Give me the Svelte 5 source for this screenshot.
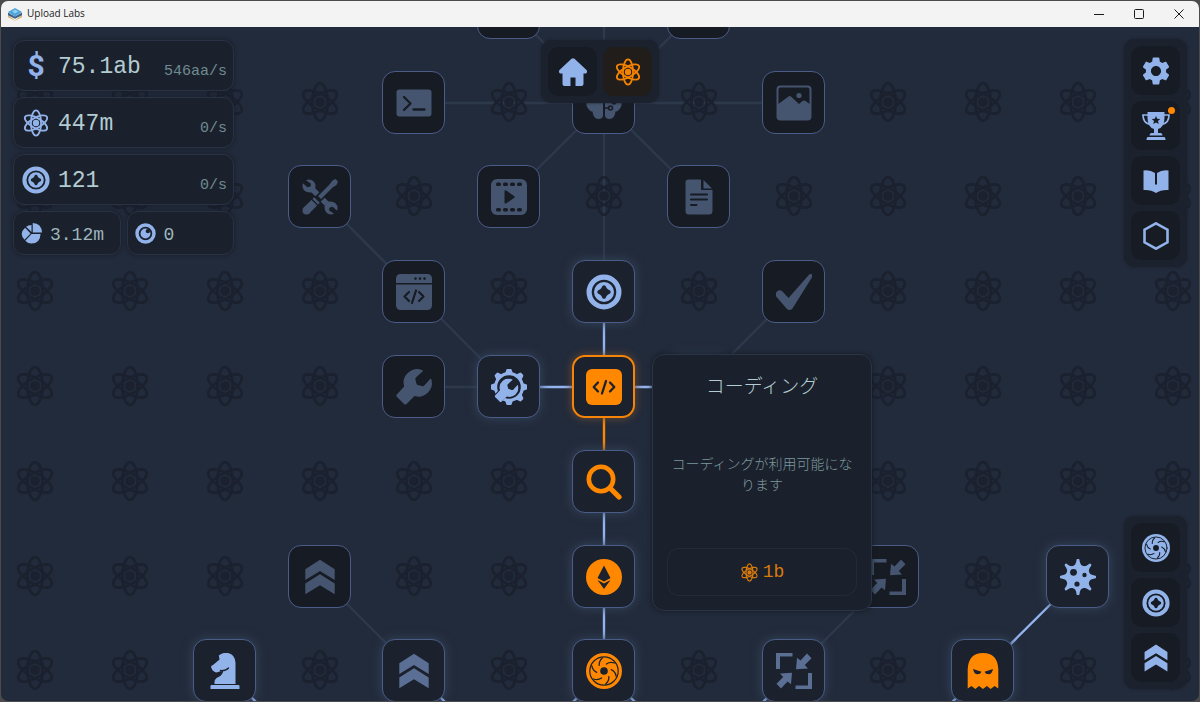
<script>
  // Grid step of the research tree, in pixels
  const STEP = 94.8;
  const at = (n) => Math.round(n * STEP);

  // state: locked | open | active, tone: dim | soft | blue | orange
  const nodes = [
    { col: -1, row: -4, icon: 'file', state: 'locked', tone: 'dim', label: 'Text' },
    { col: 1, row: -4, icon: 'image', state: 'locked', tone: 'dim', label: 'Picture' },
    { col: -2, row: -3, icon: 'terminal', state: 'locked', tone: 'dim', label: 'Terminal' },
    { col: 0, row: -3, icon: 'brain', state: 'locked', tone: 'dim', label: 'AI' },
    { col: 2, row: -3, icon: 'image', state: 'locked', tone: 'dim', label: 'Image' },
    { col: -3, row: -2, icon: 'tools', state: 'locked', tone: 'dim', label: 'Tools' },
    { col: -1, row: -2, icon: 'film', state: 'locked', tone: 'dim', label: 'Video' },
    { col: 1, row: -2, icon: 'file', state: 'locked', tone: 'dim', label: 'Document' },
    { col: -2, row: -1, icon: 'window', state: 'locked', tone: 'dim', label: 'Application' },
    { col: 0, row: -1, icon: 'token', state: 'open', tone: 'blue', label: 'Token' },
    { col: 2, row: -1, icon: 'check', state: 'locked', tone: 'dim', label: 'Check' },
    { col: -2, row: 0, icon: 'wrench', state: 'locked', tone: 'dim', label: 'Repair' },
    { col: -1, row: 0, icon: 'service', state: 'open', tone: 'blue', label: 'Service' },
    { col: 0, row: 0, icon: 'code', state: 'active', tone: 'orange', label: 'コーディング' },
    { col: 1, row: 0, icon: 'check', state: 'open', tone: 'soft', label: 'Test' },
    { col: 0, row: 1, icon: 'search', state: 'open', tone: 'orange', label: 'Search' },
    { col: -3, row: 2, icon: 'chevrons', state: 'locked', tone: 'dim', label: 'Boost II' },
    { col: 0, row: 2, icon: 'crypto', state: 'open', tone: 'orange', label: 'Crypto' },
    { col: 3, row: 2, icon: 'compress', state: 'locked', tone: 'dim', label: 'Compress II' },
    { col: 5, row: 2, icon: 'virus', state: 'open', tone: 'blue', label: 'Virus' },
    { col: -4, row: 3, icon: 'knight', state: 'open', tone: 'blue', label: 'Strategy' },
    { col: -2, row: 3, icon: 'chevrons', state: 'open', tone: 'soft', label: 'Boost' },
    { col: 0, row: 3, icon: 'swirl', state: 'open', tone: 'orange', label: 'Portal' },
    { col: 2, row: 3, icon: 'compress', state: 'open', tone: 'soft', label: 'Compress' },
    { col: 4, row: 3, icon: 'ghost', state: 'open', tone: 'orange', label: 'Ghost' }
  ];

  // [col, row, col, row, kind]
  const links = [
    [-1, -4, 0, -3, 'faint'],
    [1, -4, 0, -3, 'faint'],
    [0, -5, 0, -3, 'faint'],
    [-2, -3, 2, -3, 'faint'],
    [0, -3, -1, -2, 'faint'],
    [0, -3, 1, -2, 'faint'],
    [0, -3, 0, -1, 'faint'],
    [-3, -2, -1, 0, 'faint'],
    [-2, 0, -1, 0, 'faint'],
    [2, -1, 1, 0, 'faint'],
    [-3, 2, -2, 3, 'faint'],
    [3, 2, 2, 3, 'faint'],
    [0, -1, 0, 0, 'lit'],
    [-1, 0, 1, 0, 'lit'],
    [0, 1, 0, 3, 'lit'],
    [5, 2, 3, 4, 'lit'],
    [-4, 3, -3, 4, 'lit'],
    [-2, 3, -1, 4, 'lit'],
    [0, 3, -1, 4, 'lit'],
    [0, 3, 1, 4, 'lit'],
    [2, 3, 1, 4, 'lit'],
    [0, 0, 0, 1, 'hot']
  ];

  const taken = new Set(nodes.map((n) => `${n.col},${n.row}`));
  const atoms = [];
  for (let row = -3; row <= 6; row++) {
    for (let col = -10; col <= 10; col++) {
      if (!taken.has(`${col},${row}`)) atoms.push({ col, row });
    }
  }

  const stats = [
    { icon: 'dollar', value: '75.1ab', rate: '546aa/s' },
    { icon: 'atom', value: '447m', rate: '0/s' },
    { icon: 'token', value: '121', rate: '0/s' }
  ];
  const smallStats = [
    { icon: 'pie', value: '3.12m' },
    { icon: 'orb', value: '0' }
  ];

  const menu = [
    { icon: 'gear', label: 'Settings' },
    { icon: 'trophy', label: 'Achievements', badge: true },
    { icon: 'book', label: 'Guide' },
    { icon: 'hexagon', label: 'Modules' }
  ];
  const shortcuts = [
    { icon: 'swirl', label: 'Portal' },
    { icon: 'token', label: 'Tokens' },
    { icon: 'chevrons', label: 'Boosts' }
  ];

  const sixths = [0, 60, 120, 180, 240, 300];
  const eighths = [0, 45, 90, 135, 180, 225, 270, 315];
</script>

<svg class="defs" aria-hidden="true">
  <symbol id="atom" viewBox="0 0 42 42">
    <g fill="none" stroke="currentColor" stroke-width="2.7">
      {#each [0, 60, 120] as r}
        <ellipse cx="21" cy="21" rx="7.6" ry="18.9" transform="rotate({r} 21 21)" />
      {/each}
    </g>
    <circle cx="21" cy="21" r="4.8" fill="currentColor" />
  </symbol>
  <symbol id="terminal" viewBox="0 0 36 36">
    <rect x=".5" y="4.5" width="35" height="27" rx="3" fill="currentColor" />
    <path class="cut" d="M8 12l6.500 6.500L8 25M17.500 24.500h11" stroke-width="2.3" />
  </symbol>
  <symbol id="brain" viewBox="0 0 36 36">
    <path fill="currentColor" d="M17 3.5C13-.5 8 2 7.5 6 3 7 1 11 3 14.500-.5 17-.5 22 3.500 25c.5 1 2 1.500 3 1.500C7 31 9 34 12.500 34c2.500 0 4-1 4.500-3zM19 3.500C23-.5 28 2 28.500 6 33 7 35 11 33 14.500c3.500 2.500 3.500 7.500-.5 10.500-.5 1-2 1.500-3 1.500C29 31 27 34 23.500 34c-2.500 0-4-1-4.500-3z" />
    <path class="cut" d="M19 23h4M19 14h5l3 3" stroke-width="1.6" />
    <circle class="cut" cx="24.500" cy="23" r="2" stroke-width="1.600" />
    <circle class="cut" cx="28" cy="17" r="1.800" stroke-width="1.600" />
  </symbol>
  <symbol id="image" viewBox="0 0 36 36">
    <rect x="1.500" y="1.500" width="33" height="33" rx="3" fill="none" stroke="currentColor" stroke-width="2" />
    <path fill="currentColor" d="M1 20 12.500 11.500q1.500-1 3 .5L23 19l3.500-3q1.500-1 3 0L35 20v12q0 3-3 3H4q-3 0-3-3z" />
    <circle cx="23" cy="10.500" r="2.600" fill="currentColor" />
  </symbol>
  <symbol id="film" viewBox="0 0 36 36">
    <rect width="36" height="36" rx="6" fill="currentColor" />
    {#each [5, 12, 19, 26] as x}
      <rect class="hole" {x} y="3.500" width="5" height="3.600" rx="1.600" />
      <rect class="hole" {x} y="29" width="5" height="3.600" rx="1.600" />
    {/each}
    <path class="hole" d="M13.500 12.500q0-2 1.800-1L23 17q1.500 1 0 2l-7.700 5.300q-1.800 1-1.800-1z" />
  </symbol>
  <symbol id="file" viewBox="0 0 36 36">
    <path fill="currentColor" d="M7.500.5H20v10.500h11.500V32q0 3.500-3.500 3.500H8q-3.500 0-3.500-3.500V3.500q0-3 3-3zM22.500 1l8.500 8.500h-8.500z" />
    <path class="cut" d="M10 15.500h16M10 20.500h16M10 26h5.500" stroke-width="2" />
  </symbol>
  <symbol id="window" viewBox="0 0 36 36">
    <path fill="currentColor" d="M5 0h26q5 0 5 5v4H0V5q0-5 5-5zM0 10.500h36V31q0 5-5 5H5q-5 0-5-5z" />
    <path class="cut" d="m13 18-4.500 4.500L13 27M23 18l4.500 4.500L23 27M20 16.500 16 29" stroke-width="2.200" />
    <g class="hole">
      <circle cx="19.500" cy="4.600" r="1.300" />
      <circle cx="24" cy="4.600" r="1.300" />
      <circle cx="28.500" cy="4.600" r="1.300" />
    </g>
  </symbol>
  <symbol id="token" viewBox="0 0 36 36">
    <circle cx="18" cy="18" r="14.900" fill="none" stroke="currentColor" stroke-width="5.200" />
    <circle cx="18" cy="18" r="10" fill="currentColor" />
    <path class="hole" d="M18 11.300q1.500 0 2 1.500.4 1.300 1.300 1.900.6.700 1.900 1.300 1.500.5 1.500 2t-1.500 2q-1.300.6-1.900 1.300-.9.600-1.300 1.900-.5 1.500-2 1.500t-2-1.500q-.4-1.300-1.300-1.900-.6-.7-1.900-1.300-1.500-.5-1.500-2t1.500-2q1.300-.6 1.900-1.300.9-.6 1.300-1.900.5-1.500 2-1.500z" />
  </symbol>
  <symbol id="check" viewBox="0 0 36 36">
    <path fill="currentColor" d="M1 17.500q2.500-2.500 5.500 0l6 6.500L33 .7q1.700-1.500 3 0 1 1 0 2.600L16.500 34.500q-3 3-6 0L.6 23q-2-3 .4-5.500z" />
  </symbol>
  <symbol id="wrench" viewBox="0 0 36 36">
    <path fill="currentColor" d="M27 1.500A13.500 13.500 0 0 0 8.200 17.500L.8 25.500q-1 1.200 0 2.300L8 35q1.300 1 2.500 0l8-8A13.500 13.500 0 0 0 35.200 10q-.3-.8-1 0L28 16.700q-1 .8-2.300.4l-4-1.200q-1-.3-1.300-1.400l-1-4q-.3-1.200.5-2L26.500 2.500q.8-.7.500-1z" />
  </symbol>
  <symbol id="tools" viewBox="0 0 36 36">
    <path d="m9 9 19 19" fill="none" stroke="currentColor" stroke-width="5.500" />
    <path fill="currentColor" d="M4 1.200Q8-.5 11.500 2.300 14 5 13.300 9L9.500 13.500Q5 14 2.200 11.500-.5 8.500 1 4.200L5.300 8.300 8.500 7.500 9 4.800zM32 34.800q-4 1.700-7.500-1.100Q22 31 22.700 27l3.800-4.500q4.500-.5 7.300 2 2.700 3 1.200 7.300l-4.300-4.100-3.200.8-.5 2.700z" />
    <path class="cut edge" d="M24 12 8 28" stroke-width="7.500" />
    <path fill="currentColor" d="m30.500 1.500 3-1.500L36 2.500 34.500 6l-4 2.500L19 20l-3-3L27.500 5.500z" />
    <path d="M15 21 4.800 31.200" fill="none" stroke="currentColor" stroke-width="8" />
    <circle cx="4.500" cy="31.500" r="4" fill="currentColor" />
    <path class="cut" d="m10 20.500 5.500 5.500" stroke-width="1.300" />
  </symbol>
  <symbol id="service" viewBox="0 0 36 36">
    <circle cx="18" cy="18" r="13.400" fill="none" stroke="currentColor" stroke-width="3.200" />
    {#each eighths as r}
      <path fill="currentColor" d="M14 4.500 15.600.3q.3-.9 1.200-.9h2.400q.9 0 1.200.9L22 4.500z" transform="rotate({r} 18 18)" />
    {/each}
    <path class="cut edge" d="M3 33 15 21" stroke-width="10" />
    <use href="#wrench" x="3.500" y="9.500" width="24" height="24" />
  </symbol>
  <symbol id="code" viewBox="0 0 36 36">
    <rect width="36" height="36" rx="6" fill="currentColor" />
    <path class="cut" d="m12 13.500-4.300 4.500 4.300 4.500M24 13.500l4.300 4.500-4.300 4.500M20 12l-4 12.500" stroke-width="2.300" />
  </symbol>
  <symbol id="search" viewBox="0 0 36 36">
    <circle cx="15" cy="15" r="12.200" fill="none" stroke="currentColor" stroke-width="4.600" />
    <path d="m24.500 24.500 8.500 8.500" fill="none" stroke="currentColor" stroke-width="5.200" stroke-linecap="round" />
  </symbol>
  <symbol id="crypto" viewBox="0 0 36 36">
    <circle cx="18" cy="18" r="18" fill="currentColor" />
    <path class="hole" d="m18 6.500 6.500 12.500L18 22.500 11.500 19zM11.500 21 18 24.500 24.500 21 18 30z" />
  </symbol>
  <symbol id="swirl" viewBox="0 0 36 36">
    <circle cx="18" cy="18" r="18" fill="currentColor" />
    <circle class="cut" cx="18" cy="18" r="14.200" stroke-width="1.200" />
    {#each sixths as r}
      <path class="cut" d="M20.500 11Q24 8.500 28.500 10" stroke-width="1.300" transform="rotate({r} 18 18)" />
    {/each}
    <circle class="hole" cx="18" cy="18" r="3.800" />
  </symbol>
  <symbol id="chevrons" viewBox="0 0 36 36">
    <path fill="currentColor" d="m18 .7 14.700 9.600V21L18 12 3.300 21V10.300zM18 15.300l14.700 9.300v10.700L18 26.300l-14.700 9V24.600z" />
  </symbol>
  <symbol id="compress" viewBox="0 0 36 36">
    <path fill="currentColor" d="M0 0h16.500v3.500H4V16H0zM36 36H19.500v-3.500H32V20h4z" />
    {#each [0, 180] as r}
      <path fill="currentColor" d="m31 .5 4.500 4.800-6.700 6.700 3.200 3.500L20 16.200l1-11.400 3.500 2.700z" transform="rotate({r} 18 18)" />
    {/each}
  </symbol>
  <symbol id="virus" viewBox="0 0 36 36">
    <circle cx="18" cy="18" r="12.200" fill="currentColor" />
    {#each eighths as r}
      <path fill="currentColor" d="M12.500 8Q16 6 16.500 1.300q0-1.600 1.500-1.600t1.500 1.600Q20 6 23.500 8z" transform="rotate({r} 18 18)" />
    {/each}
    <g class="hole">
      <circle cx="13.500" cy="13.300" r="3.400" />
      <circle cx="24.500" cy="16" r="2.200" />
      <circle cx="17" cy="25" r="2.600" />
    </g>
  </symbol>
  <symbol id="knight" viewBox="0 0 36 36">
    <path fill="currentColor" d="M7.500 31V28.500Q8 25.500 11.500 24q4-2 4.700-6-3.200.2-5 1-2 .8-3.500 0-3-1.500-3.700-5 0-1.300 2-2l6.500-5.500-.7-4Q15-.5 20-.2q8 1 8.500 10V31z" />
    <path class="cut" d="M13.500 17.500q5.500.5 8-2.500" stroke-width="1.300" />
    <rect x="3.500" y="32" width="29" height="4.500" rx="1" fill="currentColor" />
  </symbol>
  <symbol id="ghost" viewBox="0 0 36 36">
    <path fill="currentColor" d="M2.700 35.500V16Q3.500 0 18 0t15.300 16v19.500L29.500 33l-3.800 3-3.800-3L18 36l-3.900-3-3.800 3-3.800-3z" />
    <path class="hole" d="m8 16 8.500 2.700q-1 2.600-4.200 2.600T8 16zM28 16l-8.500 2.700q1 2.600 4.200 2.600T28 16z" />
  </symbol>
  <symbol id="home" viewBox="0 0 28 28">
    <path fill="currentColor" d="M12.500.8q1.500-1.300 3 0l12 11.200q1.500 2-.5 3.500h-2.500V26q0 2-2 2h-6v-8.500h-5V28h-6q-2 0-2-2V15.500H1q-2-1.500-.5-3.500z" />
  </symbol>
  <symbol id="gear" viewBox="2 2 20 20">
    <path fill="currentColor" d="M19.140 12.940c.04-.3.060-.61.060-.94 0-.32-.02-.64-.07-.94l2.030-1.580c.18-.14.230-.41.120-.61l-1.920-3.320c-.12-.22-.37-.29-.59-.22l-2.390.96c-.5-.38-1.030-.7-1.620-.94l-.36-2.540c-.04-.24-.24-.41-.48-.41h-3.840c-.24 0-.43.17-.47.41l-.36 2.540c-.59.24-1.130.57-1.620.94l-2.390-.96c-.22-.08-.47 0-.59.22L2.740 8.870c-.12.21-.08.47.12.61l2.030 1.580c-.05.3-.09.63-.09.94s.02.64.07.94l-2.030 1.580c-.18.14-.23.41-.12.61l1.920 3.320c.12.22.37.29.59.22l2.390-.96c.5.38 1.030.7 1.620.94l.36 2.540c.05.24.24.41.48.41h3.840c.24 0 .44-.17.47-.41l.36-2.540c.59-.24 1.130-.56 1.620-.94l2.390.96c.22.08.47 0 .59-.22l1.920-3.320c.12-.22.07-.47-.12-.61l-2.010-1.580zM12 15.600c-1.980 0-3.600-1.620-3.600-3.600s1.620-3.600 3.600-3.600 3.600 1.620 3.600 3.600-1.620 3.600-3.600 3.600z" />
  </symbol>
  <symbol id="trophy" viewBox="0 0 28 28">
    <path fill="currentColor" d="M5.500 0h17v6q0 9-6.500 11v4h3q1.500.5 1.500 2.500h-13Q7.500 21.500 9 21h3v-4Q5.500 15 5.500 6zM6 25h16q1.500 0 1.500 3h-19q0-3 1.500-3z" />
    <path fill="none" stroke="currentColor" stroke-width="1.700" d="M6 3H1q0 8 7 9.500M22 3h5q0 8-7 9.500" />
    <path class="hole" d="m14 4 1.200 2.700 3 .3-2.200 2 .7 3-2.700-1.600L11.300 12l.7-3-2.200-2 3-.3z" />
  </symbol>
  <symbol id="book" viewBox="0 0 28 28">
    <path fill="currentColor" d="M1.500 3.500Q8 2.500 13 6v11.500h2V6q5-3.500 11.500-2.500V23Q19 22.500 14 26 9 22.500 1.500 23z" />
  </symbol>
  <symbol id="hexagon" viewBox="0 0 28 28">
    <path fill="none" stroke="currentColor" stroke-width="2.600" d="m14 1.300 11.500 6.400v12.600L14 26.700 2.500 20.300V7.700z" />
  </symbol>
  <symbol id="pie" viewBox="0 0 22 22">
    <g fill="currentColor">
      <path d="M12.300 0Q21.500.5 22 10h-9.700z" />
      <path d="M11 2v7.500L5.300 4Q7.500 2 11 2z" />
      <path d="M4.300 5 10 11l-6.300 6.500Q-2.500 11 4.300 5z" />
      <path d="M11 11.500h9.500q-.5 10-9.500 10-4 0-6.500-3z" />
    </g>
  </symbol>
  <symbol id="orb" viewBox="0 0 22 22">
    <circle cx="11" cy="11" r="8.900" fill="none" stroke="currentColor" stroke-width="3.600" />
    <circle cx="11" cy="11" r="5.200" fill="currentColor" />
    <circle class="hole" cx="13.500" cy="8.500" r="2.300" />
  </symbol>
  <symbol id="logo" viewBox="0 0 14 14">
    <path fill="#d9b26b" d="m0 8 7 5.500L14 8v2.200L7 13.800 0 10.200z" />
    <path fill="#3d6288" d="m0 5.500 7 4 7-4v2.700l-7 3.600-7-3.600z" />
    <path fill="#4fa3d8" d="m7 1 7 4-7 4.500L0 5z" />
    <path fill="#8fd0f0" d="m7 2.500 3.500 2L7 6.500 4 4.500z" />
  </symbol>
</svg>

{#snippet icon(name)}
  <svg class="icon" aria-hidden="true"><use href="#{name}" /></svg>
{/snippet}

{#snippet dock(items)}
  {#each items as item}
    <button class="dock-btn" class:current={item.current} aria-label={item.label}>
      {@render icon(item.icon)}
      {#if item.badge}<span class="badge"></span>{/if}
    </button>
  {/each}
{/snippet}

<div class="window">
  <header class="titlebar">
    <svg class="logo" aria-hidden="true"><use href="#logo" /></svg>
    <span class="title">Upload Labs</span>
    <button class="win-btn" aria-label="Minimize">
      <svg viewBox="0 0 10 10"><path d="M0 5.500h10" /></svg>
    </button>
    <button class="win-btn" aria-label="Maximize">
      <svg viewBox="0 0 10 10"><rect x=".5" y=".5" width="9" height="9" rx="1" /></svg>
    </button>
    <button class="win-btn" aria-label="Close">
      <svg viewBox="0 0 10 10"><path d="m.5.5 9 9m0-9-9 9" /></svg>
    </button>
  </header>

  <main class="board">
    <div class="tree">
      <svg class="links" aria-hidden="true">
        {#each links as [c1, r1, c2, r2, kind]}
          <line class={kind} x1={at(c1)} y1={at(r1)} x2={at(c2)} y2={at(r2)} />
        {/each}
        {#each atoms as a}
          <use class="bg-atom" href="#atom" x={at(a.col) - 21} y={at(a.row) - 22} width="42" height="42" />
        {/each}
      </svg>

      {#each nodes as n}
        <button
          class="node {n.state} {n.tone}"
          style="left: {at(n.col)}px; top: {at(n.row)}px"
          aria-label={n.label}
        >
          {@render icon(n.icon)}
        </button>
      {/each}

      <section class="popup">
        <h2>コーディング</h2>
        <p>コーディングが利用可能になります</p>
        <button class="buy">{@render icon('atom')}1b</button>
      </section>
    </div>

    <aside class="stats">
      {#each stats as s}
        <div class="stat">
          {#if s.icon === 'dollar'}
            <span class="dollar">$</span>
          {:else}
            {@render icon(s.icon)}
          {/if}
          <span class="value">{s.value}</span>
          <span class="rate">{s.rate}</span>
        </div>
      {/each}
      <div class="pair">
        {#each smallStats as s}
          <div class="stat small">
            {@render icon(s.icon)}
            <span class="value">{s.value}</span>
          </div>
        {/each}
      </div>
    </aside>

    <nav class="dock top">
      {@render dock([
        { icon: 'home', label: 'Home' },
        { icon: 'atom', label: 'Research', current: true }
      ])}
    </nav>
    <nav class="dock side">{@render dock(menu)}</nav>
    <nav class="dock side low">{@render dock(shortcuts)}</nav>
  </main>
</div>

<style>
  :global(body) {
    background: #4b4a4c;
  }
  button {
    padding: 0;
    border: 0;
    background: none;
    color: inherit;
    font: inherit;
    cursor: pointer;
  }
  svg {
    display: block;
  }
  .defs {
    position: absolute;
    width: 0;
    height: 0;
  }
  .cut {
    fill: none;
    stroke: var(--hole);
    stroke-linecap: round;
    stroke-linejoin: round;
  }
  .cut.edge {
    stroke-linecap: butt;
  }
  .hole {
    fill: var(--hole);
  }

  .window {
    display: flex;
    flex-direction: column;
    box-sizing: border-box;
    min-height: 100vh;
    padding: 1px;
    font-family: "Liberation Mono", monospace;
  }

  /* title bar */
  .titlebar {
    display: flex;
    align-items: center;
    height: 26px;
    padding-left: 7px;
    border-radius: 7px 7px 0 0;
    background: #f3f3f3;
    color: #1b1b1b;
  }
  .logo {
    width: 14px;
    height: 14px;
    margin-right: 5px;
  }
  .title {
    flex: 1;
    font: 10px/24px "Open Sans", sans-serif;
    height: 26px;
  }
  .win-btn {
    display: grid;
    place-items: center;
    width: 40px;
    height: 26px;
  }
  .win-btn svg {
    width: 10px;
    height: 10px;
    fill: none;
    stroke: #1b1b1b;
  }

  /* research tree */
  .board {
    position: relative;
    flex: 1;
    min-height: 520px;
    overflow: hidden;
    border-radius: 0 0 7px 7px;
    background: #222b3b;
  }
  .tree {
    position: absolute;
    left: calc(50% + 4px);
    top: 360px;
  }
  .links {
    width: 1px;
    height: 1px;
    overflow: visible;
  }
  .links line {
    stroke-width: 2.4;
  }
  .faint {
    stroke: #2c394b;
  }
  .lit {
    stroke: #94b4f0;
  }
  .hot {
    stroke: #ff8800;
  }
  .bg-atom {
    color: #1b212e;
  }
  .node {
    --hole: #1b212d;
    position: absolute;
    display: grid;
    place-items: center;
    box-sizing: border-box;
    width: 63px;
    height: 63px;
    margin: -32px 0 0 -32px;
    border: 1px solid #4b5c88;
    border-radius: 13px;
    background: var(--hole);
    box-shadow: 0 0 11px #35455d;
  }
  .node .icon {
    width: 36px;
    height: 36px;
    overflow: visible;
  }
  .node.locked {
    --hole: #171b24;
    box-shadow: none;
  }
  .node.active {
    border: 2px solid #f58408;
    box-shadow: 0 0 9px #6b4a35;
  }
  .node.dim {
    color: #46556f;
  }
  .node.soft {
    color: #5b6e94;
  }
  .node.blue {
    color: #92b2ea;
  }
  .node.orange {
    color: #ff8800;
  }

  .popup {
    position: absolute;
    left: 48px;
    top: -33px;
    display: flex;
    flex-direction: column;
    box-sizing: border-box;
    width: 220px;
    height: 257px;
    padding: 14px;
    border: 1px solid #2a3446;
    border-radius: 12px;
    background: #1b212c;
    box-shadow: 0 0 5px #141922;
    font-family: "Noto Sans CJK JP", sans-serif;
    text-align: center;
  }
  .popup h2 {
    margin: 0;
    color: #b3ccd2;
    font-size: 19px;
    font-weight: 300;
    line-height: 32px;
  }
  .popup p {
    flex: 1;
    margin: 0;
    padding-top: 52px;
    color: #7b989e;
    font-size: 14px;
    font-weight: 300;
    line-height: 21px;
  }
  .buy {
    display: flex;
    align-items: center;
    justify-content: center;
    gap: 4px;
    height: 48px;
    border: 1px solid #232b39;
    border-radius: 12px;
    color: #d97a0a;
    font: 18px/20px "Liberation Mono", monospace;
  }
  .buy .icon {
    width: 19px;
    height: 19px;
  }

  /* resources */
  .stats {
    position: absolute;
    left: 12px;
    top: 13px;
    display: grid;
    gap: 6px;
    width: 221px;
  }
  .stat {
    --hole: #1b212c;
    display: flex;
    align-items: center;
    gap: 8px;
    box-sizing: border-box;
    height: 51px;
    padding: 0 6px 0 8px;
    border: 1px solid #293245;
    border-radius: 11px;
    background: var(--hole);
    box-shadow: 0 0 4px #171c27;
    color: #92b2ea;
  }
  .stat .icon,
  .dollar {
    width: 28px;
    height: 28px;
  }
  .dollar {
    font: bold 30px/28px Roboto, sans-serif;
    text-align: center;
  }
  .value {
    flex: 1;
    padding-top: 3px;
    color: #b3ccd2;
    font-size: 23px;
  }
  .rate {
    padding-top: 12px;
    color: #6f8b92;
    font-size: 15px;
  }
  .pair {
    display: grid;
    grid-template-columns: 1fr 1fr;
    gap: 6px;
  }
  .small {
    height: 44px;
    padding: 0 7px;
  }
  .small .icon {
    width: 21px;
    height: 21px;
  }
  .small .value {
    color: #9db6be;
    font-size: 18px;
  }

  /* docks */
  .dock {
    position: absolute;
    display: flex;
    gap: 6px;
    padding: 7px;
    border-radius: 11px;
    background: #1b212d;
    box-shadow: 0 0 3px #1b212d;
  }
  .dock.top {
    left: 50%;
    top: 13px;
    transform: translateX(-50%);
  }
  .dock.side {
    right: 12px;
    top: 12px;
    flex-direction: column;
  }
  .dock.low {
    top: auto;
    bottom: 12px;
  }
  .dock-btn {
    --hole: #171b24;
    position: relative;
    display: grid;
    place-items: center;
    width: 49px;
    height: 49px;
    border-radius: 11px;
    background: var(--hole);
    color: #92b2ea;
  }
  .dock-btn.current {
    background: #211d1a;
    color: #f58200;
  }
  .dock-btn .icon {
    width: 28px;
    height: 28px;
  }
  .badge {
    position: absolute;
    top: 6px;
    right: 5px;
    width: 7px;
    height: 7px;
    border-radius: 50%;
    background: #ff8800;
  }
</style>
